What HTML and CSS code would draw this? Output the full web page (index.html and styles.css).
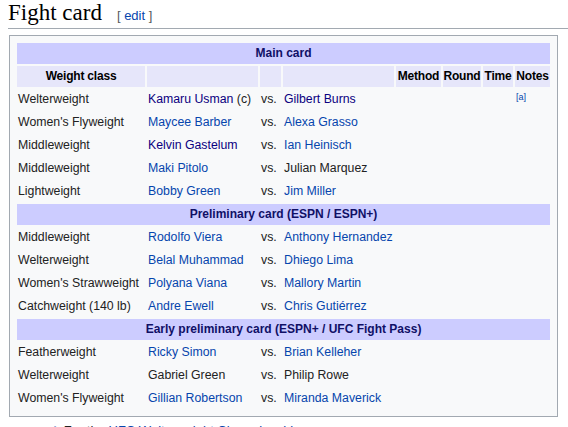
FILE: index.html
```html
<!DOCTYPE html>
<html>
<head>
<meta charset="utf-8">
<link rel="stylesheet" href="styles.css">
</head>
<body>
<h2 class="heading"><span class="title">Fight card</span><span class="edit">[ <a class="link">edit</a> ]</span></h2>
<table class="card">
<colgroup>
<col class="c1"><col class="c2"><col class="c3"><col class="c4"><col class="c5"><col class="c6"><col class="c7"><col class="c8">
</colgroup>
<tr><th class="section" colspan="8">Main card</th></tr>
<tr class="head"><th>Weight class</th><th></th><th></th><th></th><th>Method</th><th>Round</th><th>Time</th><th>Notes</th></tr>
<tr><td>Welterweight</td><td><a class="visited">Kamaru Usman</a> (c)</td><td>vs.</td><td><a class="visited">Gilbert Burns</a></td><td></td><td></td><td></td><td><sup class="note">[a]</sup></td></tr>
<tr><td>Women's Flyweight</td><td><a class="link">Maycee Barber</a></td><td>vs.</td><td><a class="link">Alexa Grasso</a></td><td></td><td></td><td></td><td></td></tr>
<tr><td>Middleweight</td><td><a class="visited">Kelvin Gastelum</a></td><td>vs.</td><td><a class="link">Ian Heinisch</a></td><td></td><td></td><td></td><td></td></tr>
<tr><td>Middleweight</td><td><a class="link">Maki Pitolo</a></td><td>vs.</td><td>Julian Marquez</td><td></td><td></td><td></td><td></td></tr>
<tr><td>Lightweight</td><td><a class="link">Bobby Green</a></td><td>vs.</td><td><a class="link">Jim Miller</a></td><td></td><td></td><td></td><td></td></tr>
<tr><th class="section" colspan="8">Preliminary card (ESPN / ESPN+)</th></tr>
<tr><td>Middleweight</td><td><a class="link">Rodolfo Viera</a></td><td>vs.</td><td><a class="link">Anthony Hernandez</a></td><td></td><td></td><td></td><td></td></tr>
<tr><td>Welterweight</td><td><a class="link">Belal Muhammad</a></td><td>vs.</td><td><a class="link">Dhiego Lima</a></td><td></td><td></td><td></td><td></td></tr>
<tr><td>Women's Strawweight</td><td><a class="link">Polyana Viana</a></td><td>vs.</td><td><a class="link">Mallory Martin</a></td><td></td><td></td><td></td><td></td></tr>
<tr><td>Catchweight (140 lb)</td><td><a class="link">Andre Ewell</a></td><td>vs.</td><td><a class="link">Chris Gutiérrez</a></td><td></td><td></td><td></td><td></td></tr>
<tr><th class="section" colspan="8">Early preliminary card (ESPN+ / UFC Fight Pass)</th></tr>
<tr><td>Featherweight</td><td><a class="link">Ricky Simon</a></td><td>vs.</td><td><a class="link">Brian Kelleher</a></td><td></td><td></td><td></td><td></td></tr>
<tr><td>Welterweight</td><td>Gabriel Green</td><td>vs.</td><td>Philip Rowe</td><td></td><td></td><td></td><td></td></tr>
<tr><td>Women's Flyweight</td><td><a class="link">Gillian Robertson</a></td><td>vs.</td><td><a class="link">Miranda Maverick</a></td><td></td><td></td><td></td><td></td></tr>
</table>
<div class="refs"><span class="caret">^</span> For the <a class="link">UFC Welterweight Championship</a>.</div>
</body>
</html>
```

FILE: styles.css
```css
html, body {
  margin: 0;
  padding: 0;
  background: #ffffff;
}
body {
  padding: 0 0 0 8px;
  font-family: "Liberation Sans", Arial, sans-serif;
  color: #222222;
}
.heading {
  margin: 0;
  padding: 0 0 2px 0;
  height: 26px;
  overflow: hidden;
  border-bottom: 1px solid #a2a9b1;
  font-weight: normal;
  line-height: 26px;
  display: flex;
  align-items: baseline;
}
.title {
  font-family: "Liberation Serif", "Times New Roman", serif;
  font-size: 23px;
  color: #000000;
}
.edit {
  margin-left: 15px;
  font-family: "Liberation Sans", Arial, sans-serif;
  font-size: 13px;
  color: #54595d;
}
.link {
  color: #0645ad;
  text-decoration: none;
}
.visited {
  color: #0b0080;
  text-decoration: none;
}
.card {
  margin: 6px 0 0 1px;
  width: 549px;
  table-layout: fixed;
  border: 1px solid #a2a9b1;
  padding: 5px;
  border-spacing: 2px;
  background: #f8f9fa;
  font-size: 12.3px;
}
.c1 { width: 128px; }
.c2 { width: 111px; }
.c3 { width: 21px; }
.c4 { width: 111px; }
.c5 { width: 45px; }
.c6 { width: 38px; }
.c7 { width: 30px; }
.c8 { width: 35px; }
.card td, .card th {
  padding: 1px 1px;
  height: 19px;
  line-height: 19px;
  white-space: nowrap;
  vertical-align: middle;
}
.card td {
  overflow: hidden;
  text-align: left;
  color: #222222;
}
.section {
  background: #ccccff;
  color: #101066;
  text-align: center;
  font-weight: bold;
  font-size: 12px;
}
.head th {
  background: #e6e6fa;
  color: #000000;
  text-align: center;
  font-weight: bold;
  font-size: 12px;
  padding: 1px 0;
  letter-spacing: -0.2px;
}
.note {
  font-size: 9px;
  color: #0645ad;
  vertical-align: top;
  line-height: 14px;
}
.refs {
  margin: 6px 0 0 44px;
  font-size: 13px;
  line-height: 16px;
}
.caret {
  color: #0645ad;
  margin-right: 2px;
}
```
